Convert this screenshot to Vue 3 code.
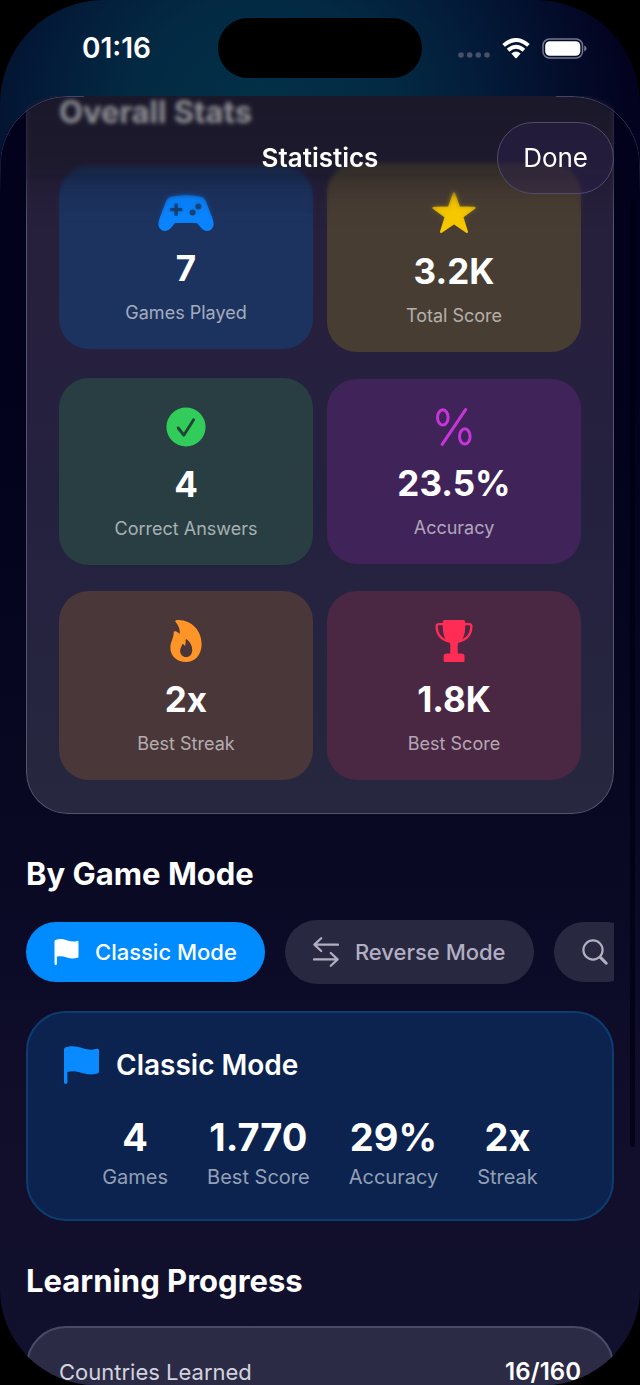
<script setup>
import { ref } from 'vue'

const stats = [
  { id: 'games', value: '7', label: 'Games Played' },
  { id: 'score', value: '3.2K', label: 'Total Score' },
  { id: 'correct', value: '4', label: 'Correct Answers' },
  { id: 'accuracy', value: '23.5%', label: 'Accuracy' },
  { id: 'streak', value: '2x', label: 'Best Streak' },
  { id: 'best', value: '1.8K', label: 'Best Score' },
]

const modes = [
  { id: 'classic', name: 'Classic Mode' },
  { id: 'reverse', name: 'Reverse Mode' },
  { id: 'search', name: 'Search Mode' },
]
const activeMode = ref('classic')

const modeStats = [
  { value: '4', label: 'Games' },
  { value: '1.770', label: 'Best Score' },
  { value: '29%', label: 'Accuracy' },
  { value: '2x', label: 'Streak' },
]
</script>

<template>
  <div class="phone">
    <header class="status">
      <time class="clock">01:16</time>
      <div class="island"></div>
      <div class="signals">
        <svg class="dots" width="32" height="6" viewBox="0 0 32 6" fill="currentColor" aria-hidden="true">
          <circle cx="3" cy="3" r="2.8" /><circle cx="11.7" cy="3" r="2.8" />
          <circle cx="20.3" cy="3" r="2.8" /><circle cx="29" cy="3" r="2.8" />
        </svg>
        <svg width="28" height="21" viewBox="0 0 28 21" aria-hidden="true">
          <g fill="none" stroke="#fff" stroke-width="3.9">
            <path d="M1.6 7.4 Q14 -3.4 26.4 7.4" />
            <path d="M6.1 12.3 Q14 5.3 21.9 12.3" />
          </g>
          <path d="M9.4 15.4 Q14 11.6 18.6 15.4 L14.7 19.9 Q14 20.6 13.3 19.9Z" fill="#fff" />
        </svg>
        <svg width="45" height="21" viewBox="0 0 45 21" aria-hidden="true">
          <rect x="1" y="1" width="39.5" height="19" rx="6.5" fill="none" stroke="#77778c" stroke-width="1.5" />
          <rect x="3.2" y="3.2" width="35.1" height="14.6" rx="4.6" fill="#fff" />
          <path d="M42.2 7.4 Q44.6 8.4 44.6 10.5 Q44.6 12.6 42.2 13.6Z" fill="#77778c" />
        </svg>
      </div>
    </header>

    <main class="sheet">
      <div class="content">
        <section class="overall">
          <h2 class="overall-title">Overall Stats</h2>
          <div class="tiles">
            <article v-for="s in stats" :key="s.id" class="tile" :class="s.id">
              <svg v-if="s.id === 'games'" width="56" height="36" viewBox="0 0 56 36" aria-hidden="true">
                <path fill="#0a84ff" d="M14 1.6 Q28 -1.4 42 1.6 Q46 2.2 48 6.4 L54 22 Q56.4 28.4 55.4 31 Q53.8 36 48.6 36 Q45.6 36 43.2 33 L39 28 H17 L12.8 33 Q10.4 36 7.4 36 Q2.2 36 .6 31 Q-.4 28.4 2 22 L8 6.4 Q10 2.2 14 1.6Z" />
                <g fill="#173966">
                  <path d="M16.4 8.4h3.4v4.5h4.6v3.4h-4.6v4.5h-3.4v-4.5h-4.6v-3.4h4.6z" />
                  <circle cx="34.6" cy="17.4" r="3" /><circle cx="40.4" cy="11.6" r="3" />
                </g>
              </svg>
              <svg v-else-if="s.id === 'score'" width="44" height="42" viewBox="0 0 44 42" aria-hidden="true">
                <path fill="#f5c800" stroke="#f5c800" stroke-width="2.4" stroke-linejoin="round" d="M22 1.6 L27 15.5 L42.4 15.9 L30.2 24.9 L34.8 39.8 L22 31 L9.2 39.8 L13.8 24.9 L1.6 15.9 L17 15.5Z" />
              </svg>
              <svg v-else-if="s.id === 'correct'" width="40" height="40" viewBox="0 0 40 40" aria-hidden="true">
                <circle cx="20" cy="20" r="19.6" fill="#32cc5a" />
                <path d="M12.2 21 L17.8 28.2 L27.6 12.8" fill="none" stroke="#1f4437" stroke-width="2.9" stroke-linecap="round" stroke-linejoin="round" />
              </svg>
              <svg v-else-if="s.id === 'accuracy'" width="36" height="38" viewBox="0 0 36 38" fill="none" stroke="#c834dc" stroke-width="3" stroke-linecap="round" aria-hidden="true">
                <ellipse cx="6.8" cy="9.4" rx="5.3" ry="7.6" />
                <ellipse cx="28.8" cy="28.4" rx="5.3" ry="7.6" />
                <path d="M29.6 1.6 L6.2 36.4" />
              </svg>
              <svg v-else-if="s.id === 'streak'" width="32" height="42" viewBox="0 0 32 43" aria-hidden="true">
                <path fill="#ff9526" d="M5 1.6 C4.6 .4 6.6 0 8.6 0 C21.6 .4 32 10.4 32 24.6 C32 36 25 43 16 43 C6.8 43 0 37 0 28.4 C0 22.4 3.6 18.4 3.4 12.6 C3.4 11.4 4.6 11.2 5.4 11.6 C7.2 12.4 8.6 13.2 9.6 14.4 C10.2 9 8 5.4 5 1.6Z" />
                <path fill="#4a363a" d="M15.6 20.4 C15.6 19.6 16.4 19.4 17 20 C20.4 23 22.4 26.6 22.4 30.6 C22.4 35 19.8 37.8 16.2 37.8 C12.4 37.8 10 35 10 31.4 C10 28.8 11.4 27.4 12.2 25 C12.4 24.4 13 24.4 13.4 24.8 L14.8 26.6 C15.6 24.8 15.8 22.6 15.6 20.4Z" />
              </svg>
              <svg v-else width="38" height="42" viewBox="0 0 38 43" aria-hidden="true">
                <path fill="#ff2d55" d="M9.6 0 H28.4 Q30.6 0 30.6 2.4 C30.6 12 29.8 19.8 24.4 22.6 Q22.8 23.6 22.8 25.4 V34.4 H26.8 Q29.8 34.4 29.8 37.4 V41.6 Q29.8 43 28.4 43 H9.8 Q8.4 43 8.4 41.6 V37.4 Q8.4 34.4 11.4 34.4 H15.2 V25.4 Q15.2 23.6 13.6 22.6 C8.2 19.8 7.4 12 7.4 2.4 Q7.4 0 9.6 0Z" />
                <path d="M8.4 4.2 H3.4 Q1.2 4.2 1.2 6.6 C1.4 15 6.6 20.2 14.4 22 M29.6 4.2 H34.6 Q36.8 4.2 36.8 6.6 C36.6 15 31.4 20.2 23.6 22" fill="none" stroke="#ff2d55" stroke-width="2.4" />
              </svg>
              <strong>{{ s.value }}</strong>
              <span>{{ s.label }}</span>
            </article>
          </div>
        </section>

        <h2 class="heading">By Game Mode</h2>
        <nav class="chips" aria-label="Game mode">
          <button v-for="m in modes" :key="m.id" type="button" class="chip" :class="{ active: m.id === activeMode }" :aria-label="m.name" @click="activeMode = m.id">
            <svg v-if="m.id === 'classic'" width="25" height="26" viewBox="0 0 35 38" aria-hidden="true">
              <path fill="currentColor" d="M0 3.4 Q0 2.2 1.2 1.6 C8 -1.2 14 .6 19 2.2 C24.6 4 29 4 33 2.8 Q35 2.2 35 4.2 V25.4 Q35 27 33.4 27.4 C28 29 23.4 28.6 18 27 C12.6 25.4 8 24.8 3.4 26 V36.6 Q3.4 38 1.7 38 Q0 38 0 36.6Z" />
            </svg>
            <svg v-else-if="m.id === 'reverse'" width="26" height="30" viewBox="0 0 26 30" fill="none" stroke="currentColor" stroke-width="2.2" stroke-linecap="round" stroke-linejoin="round" aria-hidden="true">
              <path d="M25 7.6 H1.4 M8.2 1.2 L1.4 7.6 L8.2 14 M1 22.4 H24.6 M17.8 16 L24.6 22.4 L17.8 28.8" />
            </svg>
            <svg v-else width="26" height="26" viewBox="0 0 26 26" fill="none" stroke="currentColor" stroke-linecap="round" aria-hidden="true">
              <circle cx="11" cy="11" r="9.6" stroke-width="2.2" />
              <path d="M18.4 18.4 L24.2 24.2" stroke-width="3" />
            </svg>
            <span v-if="m.id !== 'search'">{{ m.name }}</span>
          </button>
        </nav>

        <section class="mode-card">
          <h3 class="mode-title">
            <svg width="35" height="38" viewBox="0 0 35 38" aria-hidden="true">
              <path fill="#0a8aff" d="M0 3.4 Q0 2.2 1.2 1.6 C8 -1.2 14 .6 19 2.2 C24.6 4 29 4 33 2.8 Q35 2.2 35 4.2 V25.4 Q35 27 33.4 27.4 C28 29 23.4 28.6 18 27 C12.6 25.4 8 24.8 3.4 26 V36.6 Q3.4 38 1.7 38 Q0 38 0 36.6Z" />
            </svg>
            Classic Mode
          </h3>
          <dl class="mode-stats">
            <div v-for="s in modeStats" :key="s.label">
              <dt>{{ s.label }}</dt>
              <dd>{{ s.value }}</dd>
            </div>
          </dl>
        </section>

        <h2 class="heading">Learning Progress</h2>
        <section class="progress-card">
          <span>Countries Learned</span>
          <strong>16/160</strong>
        </section>
      </div>

      <div class="fade"></div>
      <div class="navbar">
        <h1>Statistics</h1>
        <button type="button" class="done">Done</button>
      </div>
      <div class="scrollbar"></div>
    </main>
  </div>
</template>

<style>
body {
  background: #000;
}
</style>

<style scoped>
* {
  box-sizing: border-box;
}
h1, h2, h3, dl, dd {
  margin: 0;
}
button {
  font: inherit;
  cursor: pointer;
}
svg {
  display: block;
  flex: none;
}
.phone {
  display: flex;
  flex-direction: column;
  height: 100vh;
  overflow: hidden;
  border-radius: 104px 104px 96px 96px;
  color: #fff;
  font-family: Inter, "Liberation Sans", sans-serif;
  background: radial-gradient(ellipse 370px 320px at 41% 110px, #033048 0, #032943 36%, #031836 66%, #03021f 100%);
}
.status {
  display: grid;
  grid-template-columns: 1fr 204px 1fr;
  align-items: center;
  flex: none;
  height: 96px;
}
.clock {
  padding-left: 82px;
  font-size: 28px;
  font-weight: 600;
}
.island {
  height: 60px;
  border-radius: 30px;
  background: #000;
}
.signals {
  display: flex;
  align-items: center;
  justify-content: flex-end;
  gap: 12px;
  padding-right: 53px;
}
.dots {
  align-self: flex-end;
  margin-bottom: 1px;
  color: #48506a;
}
.sheet {
  position: relative;
  flex: 1;
  min-height: 0;
  overflow: hidden;
  border-radius: 68px 68px 0 0;
  background: linear-gradient(#03021c 0, #03021c 300px, #090924 760px, #100e2b 1000px, #11102d 100%);
}
.sheet::after {
  content: "";
  position: absolute;
  inset: 0;
  border: 1px solid #45446a;
  border-radius: inherit;
  -webkit-mask-image: linear-gradient(#000 10px, transparent 100px);
  mask-image: linear-gradient(#000 10px, transparent 100px);
  clip-path: polygon(0 0, 84px 0, 84px 100px, calc(100% - 84px) 100px, calc(100% - 84px) 0, 100% 0, 100% 100%, 0 100%);
  pointer-events: none;
}
.content {
  padding: 0 26px;
}
.overall {
  padding: 0 32px 33px;
  border: 1px solid #55546d;
  border-top: 0;
  border-radius: 0 0 42px 42px;
  background: linear-gradient(#272039, #27203d 25%, #24213f 55%, #27273f);
}
.overall-title {
  font-size: 31px;
  line-height: 32px;
  font-weight: 700;
}
.tiles {
  display: grid;
  grid-template-columns: 1fr 1fr;
  align-items: center;
  gap: 26px 14px;
  margin-top: 35px;
}
.tile {
  display: flex;
  flex-direction: column;
  align-items: center;
  padding: 29px 8px 25px;
  border-radius: 30px;
}
.tile strong {
  margin: 15px 0 12px;
  font-size: 35px;
  line-height: 44px;
  font-weight: 700;
}
.tile span {
  color: rgba(255, 255, 255, 0.6);
  font-size: 18px;
  line-height: 22px;
}
.games { background: #1d335f; }
.score { background: #483d33; }
.correct { background: #283e42; }
.accuracy { background: #402459; }
.streak { background: #4a373a; }
.best { background: #4a2743; }
.heading {
  margin-top: 38px;
  font-size: 31px;
  line-height: 44px;
  font-weight: 700;
}
.chips {
  display: flex;
  align-items: center;
  gap: 20px;
  margin-top: 24px;
  overflow: hidden;
}
.chip {
  display: flex;
  align-items: center;
  flex: none;
  gap: 16px;
  padding: 17px 28px;
  border: 0;
  border-radius: 33px;
  background: #292841;
  color: #b1afc1;
  font-size: 22px;
  line-height: 26px;
  font-weight: 500;
}
.chip.active {
  background: #008cff;
  color: #fff;
}
.mode-card {
  margin-top: 27px;
  padding: 33px 36px 27px;
  border: 2px solid #0d3d70;
  border-radius: 40px;
  background: #0b234e;
}
.mode-title {
  display: flex;
  align-items: center;
  gap: 17px;
  font-size: 28px;
  line-height: 38px;
  font-weight: 600;
}
.mode-stats {
  display: flex;
  justify-content: center;
  gap: 39px;
  margin-top: 28px;
}
.mode-stats div {
  display: flex;
  flex-direction: column-reverse;
  align-items: center;
}
.mode-stats dt {
  color: #93a0b6;
  font-size: 20px;
  line-height: 30px;
}
.mode-stats dd {
  font-size: 38px;
  line-height: 50px;
  font-weight: 700;
}
.progress-card {
  display: flex;
  justify-content: space-between;
  margin-top: 23px;
  padding: 30px 31px 40px;
  border: 2px solid #4b4a66;
  border-radius: 40px;
  background: #2c2b46;
  font-size: 22px;
  line-height: 28px;
}
.progress-card span {
  color: #d3d2df;
}
.progress-card strong {
  font-size: 24px;
  font-weight: 600;
}
.fade {
  position: absolute;
  inset: 0 26px auto;
  height: 130px;
  background: linear-gradient(rgba(14, 16, 26, 0.5), rgba(14, 16, 26, 0.4) 50%, transparent);
  backdrop-filter: blur(2px);
  -webkit-mask-image: linear-gradient(#000 60%, transparent);
  mask-image: linear-gradient(#000 60%, transparent);
  pointer-events: none;
}
.navbar {
  position: absolute;
  inset: 26px 26px auto;
  display: grid;
  grid-template-columns: 1fr auto 1fr;
  align-items: center;
}
.navbar h1 {
  grid-column: 2;
  font-size: 26px;
  line-height: 32px;
  font-weight: 600;
}
.done {
  justify-self: end;
  padding: 18px 25px;
  border: 1px solid #524a6e;
  border-radius: 36px;
  background: rgba(44, 34, 76, 0.45);
  color: #fff;
  font-size: 26px;
  line-height: 34px;
}
.scrollbar {
  position: absolute;
  top: 104px;
  right: 5px;
  bottom: 238px;
  width: 5px;
  border-radius: 3px;
  background: rgba(0, 0, 14, 0.7);
}
</style>
